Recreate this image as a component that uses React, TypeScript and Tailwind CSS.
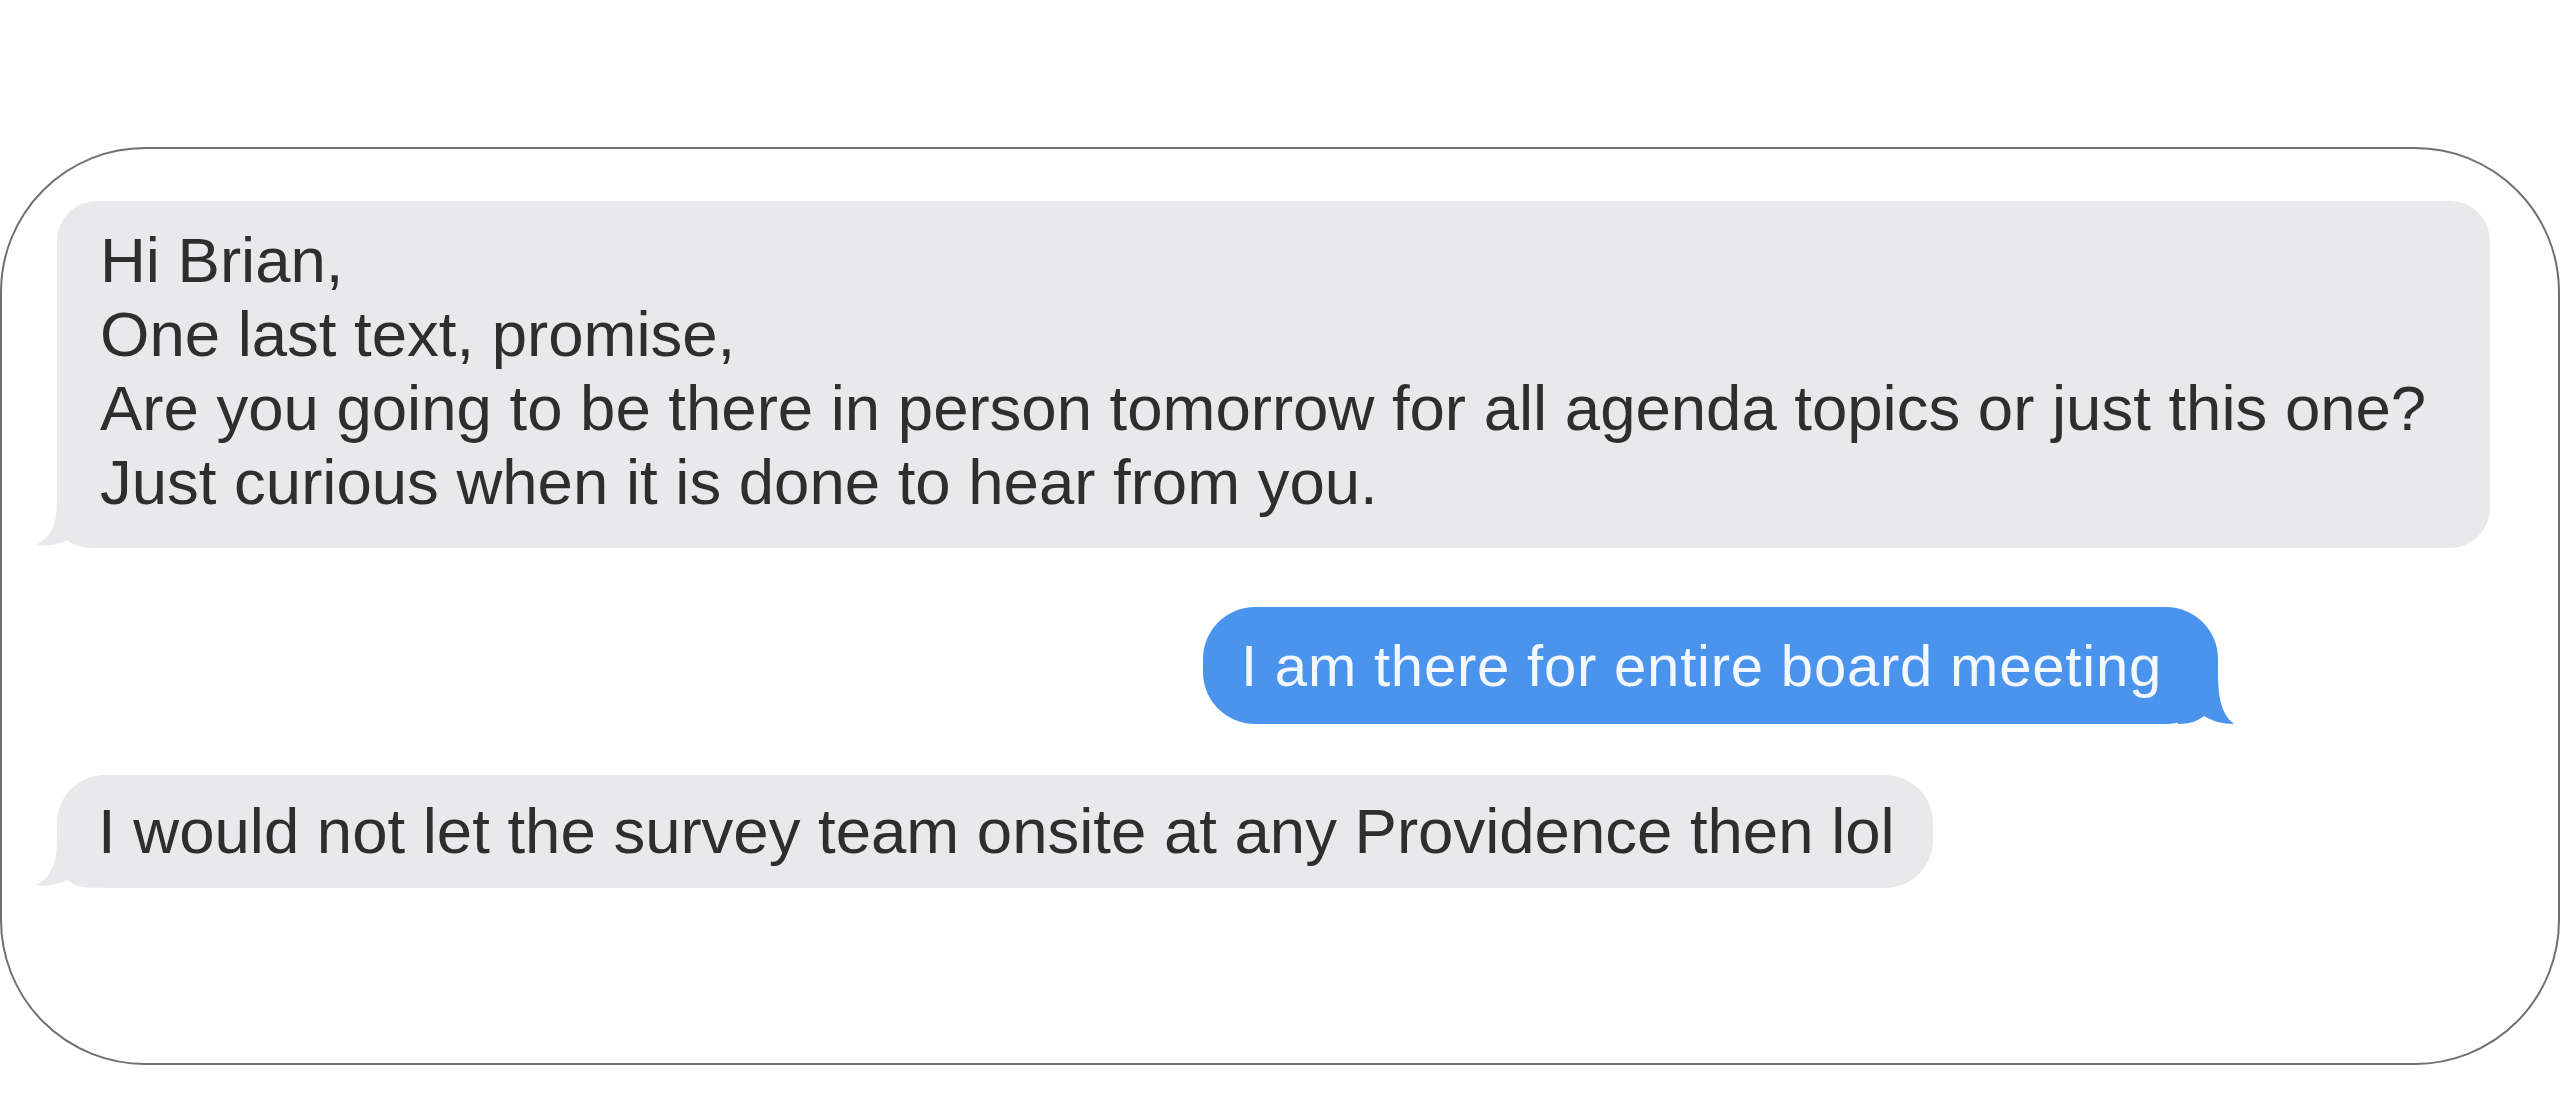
import React from "react";

const font = { fontFamily: '"Liberation Sans", Arial, Helvetica, sans-serif' };

function LeftTail() {
  return (
    <svg
      className="absolute left-[-22px] bottom-0"
      width="62"
      height="52"
      viewBox="0 0 62 52"
    >
      <path
        d="M22 0 C22 24 19 40 1 49 C12 51 24 48 32 44 C38 49 46 52 62 52 L62 0 Z"
        fill="#e9e9eb"
      />
    </svg>
  );
}

function RightTail() {
  return (
    <svg
      className="absolute right-[-16px] bottom-[-1px]"
      width="56"
      height="56"
      viewBox="0 0 56 56"
    >
      <path
        d="M40 0 C40 26 42 44 56 55 C44 55 34 52 26 47 C20 52 12 55 0 55 L0 0 Z"
        fill="#4b94ee"
      />
    </svg>
  );
}

export default function App() {
  return (
    <div className="w-[2560px] h-[1093px] bg-white pt-[147px]" style={font}>
      <div className="w-[2560px] h-[918px] border-2 border-[#707070] rounded-[145px] pt-[52px] pl-[55px] flex flex-col items-start">
        {/* Incoming bubble 1 */}
        <div className="relative w-[2433px] h-[347px]">
          <LeftTail />
          <div className="relative w-full h-full bg-[#e9e9eb] rounded-[40px] pl-[43px] pt-[22px] text-[63.5px] leading-[74px] text-[#2e2e2e] whitespace-nowrap">
            <div>Hi Brian,</div>
            <div>One last text, promise,</div>
            <div>Are you going to be there in person tomorrow for all agenda topics or just this one?</div>
            <div>Just curious when it is done to hear from you.</div>
          </div>
        </div>

        {/* Outgoing bubble */}
        <div className="relative mt-[59px] ml-[1146px] w-[1015px] h-[117px]">
          <RightTail />
          <div className="relative w-full h-full bg-[#4b94ee] rounded-[52px] pl-[38px] flex items-center text-[58px] leading-none tracking-[0.8px] text-[#f3f7fe] whitespace-nowrap">
            I am there for entire board meeting
          </div>
        </div>

        {/* Incoming bubble 2 */}
        <div className="relative mt-[51px] w-[1876px] h-[113px]">
          <LeftTail />
          <div className="relative w-full h-full bg-[#e9e9eb] rounded-[48px] pl-[41px] flex items-center text-[63.5px] leading-none text-[#2e2e2e] whitespace-nowrap">
            I would not let the survey team onsite at any Providence then lol
          </div>
        </div>
      </div>
    </div>
  );
}
